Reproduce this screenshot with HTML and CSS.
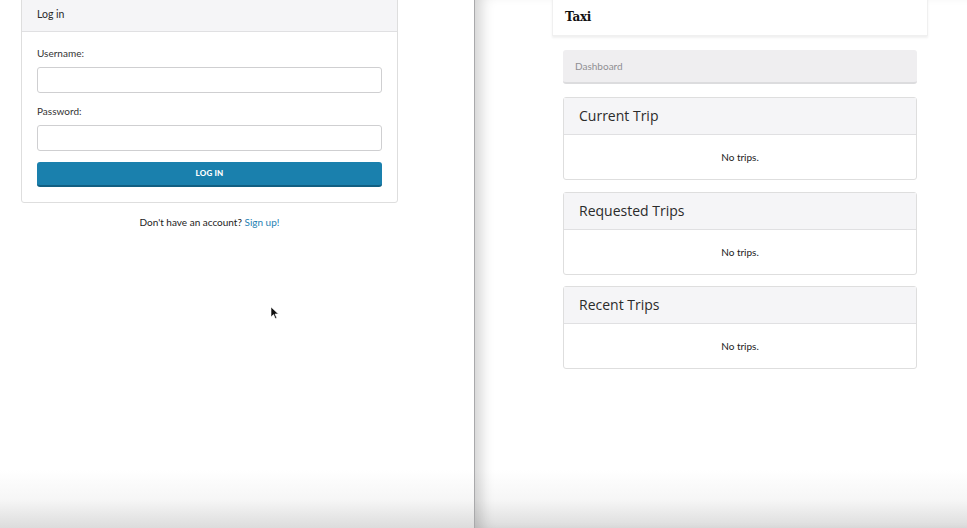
FILE: index.html
```html
<!DOCTYPE html>
<html>
<head>
<meta charset="utf-8">
<link rel="stylesheet" href="styles.css">
</head>
<body>
<div class="screen">
  <section class="pane pane-left">
    <div class="card login-card">
      <div class="card-head small">Log in</div>
      <form class="login-body">
        <label class="field-label">Username:</label>
        <div class="input"></div>
        <label class="field-label">Password:</label>
        <div class="input"></div>
        <div class="btn">LOG IN</div>
      </form>
    </div>
    <p class="signup">Don't have an account? <a class="link">Sign up!</a></p>
    <svg class="cursor" width="10" height="14" viewBox="0 0 10 14"><path d="M1 1 L1 11 L3.5 8.6 L5.3 12.6 L6.8 11.9 L5 8 L8.4 8 Z" fill="#111" stroke="#fff" stroke-width="0.6"/></svg>
  </section>
  <section class="pane pane-right">
    <div class="col">
      <div class="navbar"><span class="brand">Taxi</span></div>
      <div class="inner">
        <div class="crumb">Dashboard</div>
        <div class="card trip">
          <div class="card-head big">Current Trip</div>
          <div class="trip-body">No trips.</div>
        </div>
        <div class="card trip">
          <div class="card-head big">Requested Trips</div>
          <div class="trip-body">No trips.</div>
        </div>
        <div class="card trip">
          <div class="card-head big">Recent Trips</div>
          <div class="trip-body">No trips.</div>
        </div>
      </div>
    </div>
  </section>
</div>
</body>
</html>
```

FILE: styles.css
```css
* { box-sizing: border-box; }
html, body { margin: 0; padding: 0; }
body {
  width: 967px;
  height: 528px;
  overflow: hidden;
  font-family: Lato, "Noto Sans", sans-serif;
  color: #222;
  background: #fff;
}
.screen {
  display: flex;
  height: 528px;
}
.pane {
  height: 528px;
  position: relative;
  background: linear-gradient(to bottom, #fff 0px, #fff 470px, #f6f6f6 500px, #dcdcdc 528px);
}
.pane-left {
  width: 475px;
  border-right: 1px solid #a9a9ab;
  padding-left: 21px;
}
.pane-right {
  flex: 1;
  padding-left: 77px;
  box-shadow: inset 14px 0 14px -8px rgba(0,0,0,0.18);
}
.card {
  background: #fff;
  border: 1px solid #dedede;
  border-radius: 3px;
}
.login-card {
  width: 377px;
  margin-top: -5px;
}
.card-head {
  background: #f5f5f7;
  border-bottom: 1px solid #e0e0e2;
  color: #2a2a2a;
}
.card-head.small {
  height: 36px;
  padding: 11px 15px 0;
  font-size: 10.5px;
  line-height: 14px;
}
.login-body {
  margin: 0;
  padding: 14px 15px 15px;
  display: flex;
  flex-direction: column;
}
.field-label {
  font-size: 10px;
  line-height: 14px;
  color: #333;
  margin-bottom: 7px;
}
.input {
  height: 26px;
  border: 1px solid #cfcfd1;
  border-radius: 3px;
  background: #fff;
  margin-bottom: 11px;
}
.btn {
  height: 25px;
  background: #1a80ad;
  border-bottom: 2px solid #115f82;
  border-radius: 3px;
  color: #fff;
  font-size: 8px;
  font-weight: 900;
  letter-spacing: 0.2px;
  text-align: center;
  line-height: 23px;
}
.signup {
  width: 377px;
  margin: 12px 0 0;
  text-align: center;
  font-size: 10px;
  line-height: 14px;
  color: #222;
}
.link { color: #1f7fb3; }
.cursor {
  position: absolute;
  left: 270px;
  top: 306px;
}
.col {
  width: 376px;
}
.navbar {
  height: 39px;
  margin-top: -3px;
  background: #fff;
  border: 1px solid #f0f0f0;
  border-top: none;
  box-shadow: 0 2px 2px rgba(0,0,0,0.06);
  padding: 8px 12px 0;
}
.brand {
  font-family: "DejaVu Serif", "Liberation Serif", serif;
  font-weight: bold;
  font-size: 12px;
  line-height: 14px;
  color: #111;
  letter-spacing: -0.3px;
}
.inner {
  padding: 14px 11px 0;
  display: flex;
  flex-direction: column;
  gap: 12px;
}
.crumb {
  height: 34px;
  background: #efeef0;
  border-radius: 3px;
  border-bottom: 2px solid #dcdcde;
  padding: 9px 12px 0;
  font-size: 10px;
  line-height: 14px;
  color: #8f8f93;
  margin-bottom: 1px;
}
.card-head.big {
  height: 37px;
  padding: 8px 15px 0;
  font-family: "Open Sans", Lato, sans-serif;
  font-size: 14px;
  line-height: 20px;
  color: #2b2b2b;
}
.trip-body {
  height: 44px;
  text-align: center;
  font-size: 10px;
  line-height: 14px;
  padding-top: 15px;
  color: #222;
}
.trip:last-child { margin-top: -1px; }
```
